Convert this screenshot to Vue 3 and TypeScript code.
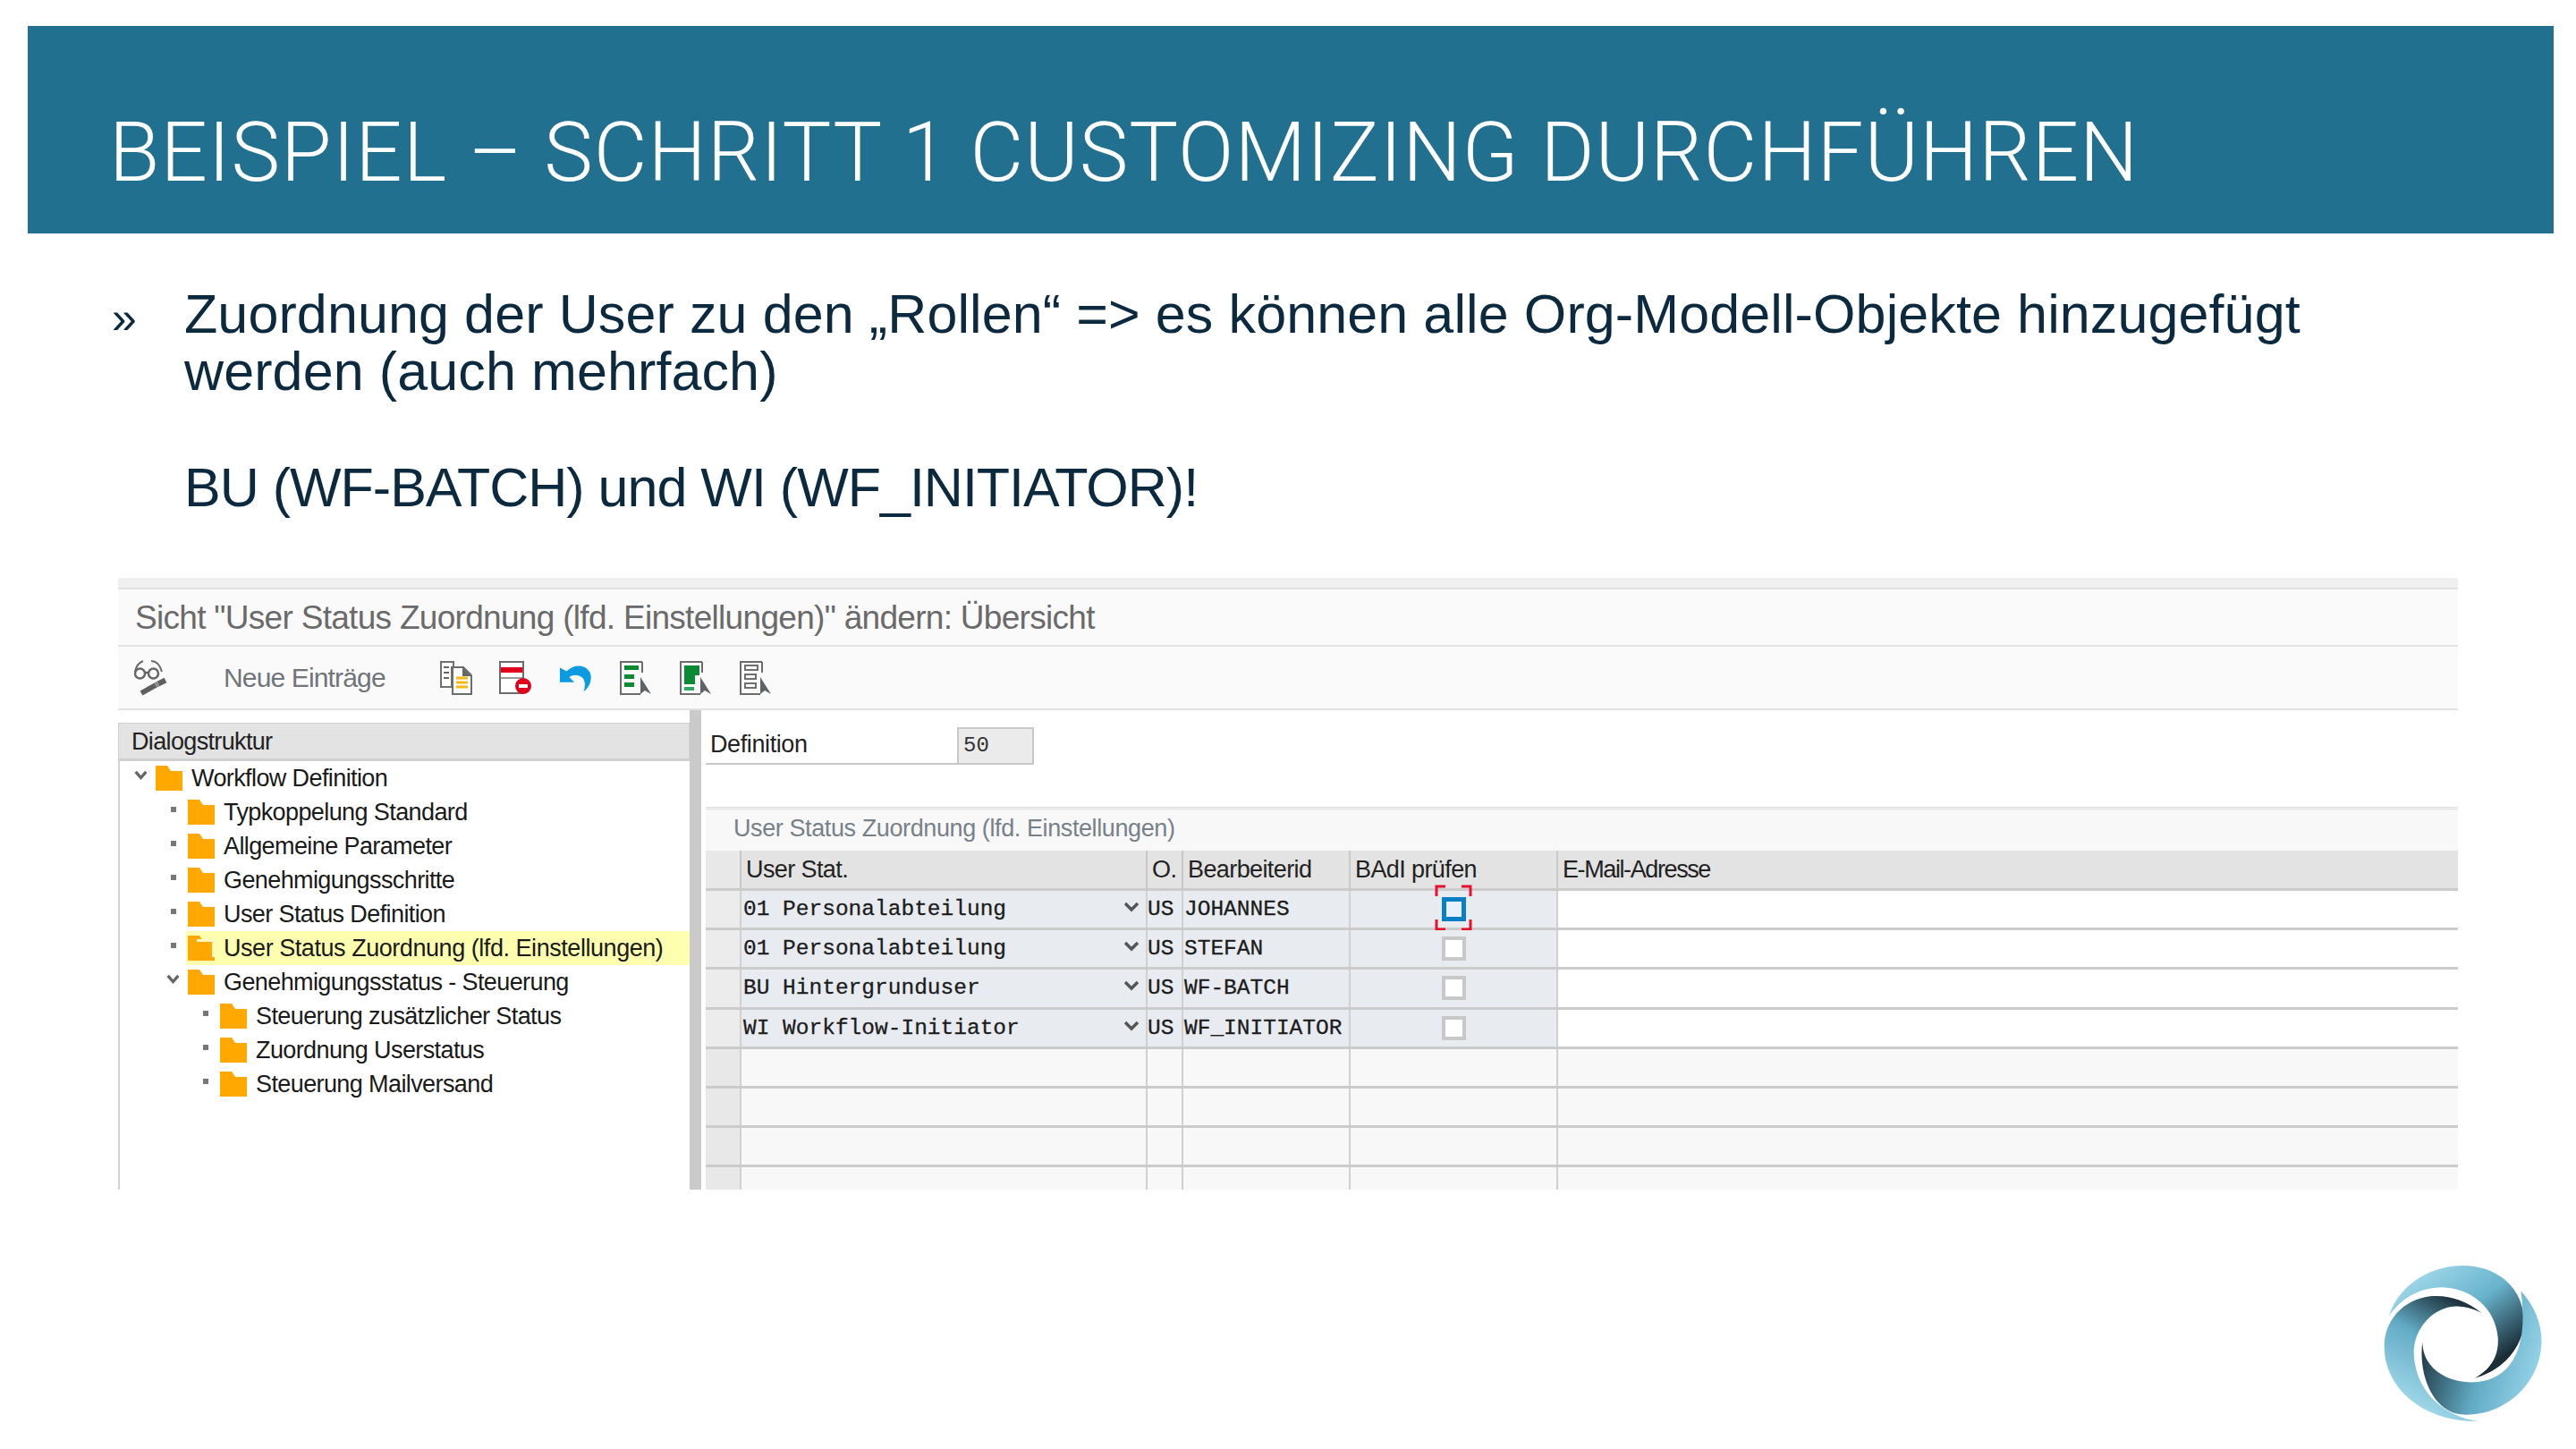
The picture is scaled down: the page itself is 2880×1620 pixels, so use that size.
<script setup lang="ts">
interface TreeNode {
  label: string;
  level: number;
  expanded?: boolean;
  selected?: boolean;
}

const treeNodes: TreeNode[] = [
  { label: 'Workflow Definition', level: 0, expanded: true },
  { label: 'Typkoppelung Standard', level: 1 },
  { label: 'Allgemeine Parameter', level: 1 },
  { label: 'Genehmigungsschritte', level: 1 },
  { label: 'User Status Definition', level: 1 },
  { label: 'User Status Zuordnung (lfd. Einstellungen)', level: 1, selected: true },
  { label: 'Genehmigungsstatus - Steuerung', level: 1, expanded: true },
  { label: 'Steuerung zusätzlicher Status', level: 2 },
  { label: 'Zuordnung Userstatus', level: 2 },
  { label: 'Steuerung Mailversand', level: 2 },
];

const rows = [
  { status: '01 Personalabteilung', obj: 'US', agent: 'JOHANNES', focus: true },
  { status: '01 Personalabteilung', obj: 'US', agent: 'STEFAN', focus: false },
  { status: 'BU Hintergrunduser', obj: 'US', agent: 'WF-BATCH', focus: false },
  { status: 'WI Workflow-Initiator', obj: 'US', agent: 'WF_INITIATOR', focus: false },
];
</script>

<template>
  <div class="slide">
    <header class="banner">
      <h1>BEISPIEL – SCHRITT 1 CUSTOMIZING DURCHFÜHREN</h1>
    </header>

    <section class="copy">
      <span class="mark">»</span>
      <div>
        <p class="wide">Zuordnung der User zu den „Rollen“ =&gt; es können alle Org-Modell-Objekte hinzugefügt<br />werden (auch mehrfach)</p>
        <p class="second">BU (WF-BATCH) und WI (WF_INITIATOR)!</p>
      </div>
    </section>

    <section class="sap">
      <div class="sap-strip"></div>
      <div class="sap-title">Sicht "User Status Zuordnung (lfd. Einstellungen)" ändern: Übersicht</div>
      <div class="sap-tools">
        <svg class="glasses" width="40" height="40" viewBox="0 0 40 40">
          <path d="M1 13C2 7 5 3 10 1M19 1c6 0 10 5 12 12" fill="none" stroke="#6a6a6a" stroke-width="2" />
          <circle cx="6.500" cy="15" r="5.500" fill="none" stroke="#666" stroke-width="2.500" />
          <circle cx="21.500" cy="15" r="5.500" fill="none" stroke="#666" stroke-width="2.500" />
          <path d="M12 14h4" stroke="#666" stroke-width="2.500" />
          <path d="M8 37l16-9M27 26.500l8-4" stroke="#5f5f5f" stroke-width="6" />
          <path d="M24 28l3-1.500" stroke="#8a8a8a" stroke-width="6" />
        </svg>
        <span class="new-entries">Neue Einträge</span>
        <div class="tool-icons">
          <svg width="38" height="40" viewBox="0 0 38 40">
            <path d="M2 2h14v6h-2v22H2z" fill="#fff" stroke="#707070" stroke-width="2" />
            <path d="M5 8h6M5 14h6M5 20h6" stroke="#666" stroke-width="2" />
            <path d="M15 8h12l9 9v21H15z" fill="#fff" stroke="#6c6c6c" stroke-width="2" />
            <path d="M26 8l10 10H26z" fill="#666" />
            <path d="M19 20h13M19 25h13M19 30h13" stroke="#fdb813" stroke-width="3" />
          </svg>
          <svg width="38" height="40" viewBox="0 0 38 40">
            <path d="M1 2h26v35H1z" fill="#fff" stroke="#6c6c6c" stroke-width="2" />
            <rect x="2" y="8" width="24" height="6" fill="#e1001b" />
            <path d="M2 20h24" stroke="#999" stroke-width="2" />
            <circle cx="27" cy="29" r="9" fill="#e1001b" />
            <rect x="22" y="27" width="10" height="4" fill="#fff" />
          </svg>
          <svg width="38" height="40" viewBox="0 0 40 40">
            <path d="M1 8v17h17l-6-6c5-4 12-3 16 1 3 4 3 10 1 16 7-5 11-15 7-23C31 4 18 3 9 12z" fill="#0a9be0" />
          </svg>
          <svg width="38" height="40" viewBox="0 0 38 40">
            <path d="M26 2H2v36h22" fill="none" stroke="#6c6c6c" stroke-width="2" />
            <path d="M26 2v12" stroke="#6c6c6c" stroke-width="2" />
            <rect x="6" y="6" width="16" height="5" fill="#0a8a32" />
            <rect x="6" y="16" width="11" height="5" fill="#0a8a32" />
            <rect x="6" y="25" width="11" height="5" fill="#0a8a32" />
            <path d="M24 19l12 19-7-4-5 4z" fill="#5e6368" />
          </svg>
          <svg width="38" height="40" viewBox="0 0 38 40">
            <path d="M26 2H2v36h22" fill="none" stroke="#6c6c6c" stroke-width="2" />
            <path d="M26 2v12" stroke="#6c6c6c" stroke-width="2" />
            <path d="M6 6h17v11h-5v10H6z" fill="#0a8a32" />
            <path d="M6 30h11v4H6z" fill="#2aa860" />
            <path d="M24 19l12 19-7-4-5 4z" fill="#5e6368" />
          </svg>
          <svg width="38" height="40" viewBox="0 0 38 40">
            <path d="M26 2H2v36h22" fill="none" stroke="#6c6c6c" stroke-width="2" />
            <path d="M26 2v12" stroke="#6c6c6c" stroke-width="2" />
            <rect x="7" y="6" width="14" height="5" fill="#fff" stroke="#707070" stroke-width="2" />
            <rect x="7" y="16" width="12" height="5" fill="#fff" stroke="#707070" stroke-width="2" />
            <rect x="7" y="26" width="12" height="5" fill="#fff" stroke="#707070" stroke-width="2" />
            <path d="M24 19l12 19-7-4-5 4z" fill="#5e6368" />
          </svg>
        </div>
      </div>

      <div class="sap-main">
        <aside class="tree">
          <div class="tree-head">Dialogstruktur</div>
          <ul class="tree-list">
            <li
              v-for="node in treeNodes"
              :key="node.label"
              class="tree-row"
              :class="['lvl-' + node.level, { selected: node.selected }]"
            >
              <span class="marker">
                <svg v-if="node.expanded" width="18" height="14" viewBox="0 0 18 14">
                  <path d="M2 2l7 8 7-8" fill="none" stroke="#666" stroke-width="4" />
                </svg>
                <span v-else class="dot"></span>
              </span>
              <svg class="folder" width="30" height="28" viewBox="0 0 30 28">
                <path d="M0 0h13l4 6h13v22H0z" fill="#ffa800" />
                <path v-if="node.selected" d="M10 4h20v20h-3V7H10z" fill="#fff6c0" />
              </svg>
              <span class="tree-label">{{ node.label }}</span>
            </li>
          </ul>
        </aside>
        <div class="splitter"></div>
        <div class="content">
          <div class="def-row">
            <span class="def-label">Definition</span>
            <span class="def-value">50</span>
          </div>

          <div class="table-panel">
            <div class="table-title">User Status Zuordnung (lfd. Einstellungen)</div>
            <div class="grid head">
              <div class="cell sel"></div>
              <div class="cell">User Stat.</div>
              <div class="cell">O.</div>
              <div class="cell">Bearbeiterid</div>
              <div class="cell">BAdI prüfen</div>
              <div class="cell tight">E-Mail-Adresse</div>
            </div>
            <div v-for="(row, i) in rows" :key="i" class="grid data">
              <div class="cell sel"></div>
              <div class="cell mono status">
                {{ row.status }}
                <svg class="drop" width="16" height="12" viewBox="0 0 16 12">
                  <path d="M1 2l7 7 7-7" fill="none" stroke="#555" stroke-width="3.500" />
                </svg>
              </div>
              <div class="cell mono obj">{{ row.obj }}</div>
              <div class="cell mono agent">{{ row.agent }}</div>
              <div class="cell check">
                <span class="box" :class="{ active: row.focus }"></span>
                <svg v-if="row.focus" class="focus" width="42" height="52" viewBox="0 0 42 52">
                  <path d="M12 2H2v11M30 2h10v11M2 39v11h10M40 39v11H30" fill="none" stroke="#e8102a" stroke-width="3" />
                </svg>
              </div>
              <div class="cell mail"></div>
            </div>
            <div v-for="n in 4" :key="n" class="grid empty">
              <div class="cell sel"></div>
              <div class="cell"></div>
              <div class="cell"></div>
              <div class="cell"></div>
              <div class="cell"></div>
              <div class="cell"></div>
            </div>
          </div>
        </div>
      </div>
    </section>

    <svg class="logo" width="240" height="230" viewBox="0 0 720 690">
      <defs>
        <linearGradient id="swirlA" x1="0.15" y1="0.1" x2="0.8" y2="0.85">
          <stop offset="0" stop-color="#a0d8ea" />
          <stop offset="0.5" stop-color="#68b3cd" />
          <stop offset="1" stop-color="#1b2e38" />
        </linearGradient>
        <linearGradient id="swirlB" x1="0.85" y1="0.1" x2="0.45" y2="1">
          <stop offset="0" stop-color="#1f3540" />
          <stop offset="0.4" stop-color="#62abc5" />
          <stop offset="1" stop-color="#a5dcec" />
        </linearGradient>
        <linearGradient id="swirlC" x1="0" y1="0.3" x2="1" y2="0.6">
          <stop offset="0" stop-color="#1b2e38" />
          <stop offset="0.55" stop-color="#62abc5" />
          <stop offset="1" stop-color="#96d4e8" />
        </linearGradient>
      </defs>
      <path d="M92 245C130 130 240 75 340 75C470 75 548 165 545 265C543 350 470 430 380 452C440 420 462 370 458 315C450 220 370 150 270 148C190 148 130 190 92 245Z" fill="url(#swirlA)" />
      <path d="M405 235C350 190 290 172 230 178C135 190 75 265 77 350C80 490 210 600 392 597C270 580 180 490 176 370C175 280 250 205 330 212C355 214 385 222 405 235Z" fill="url(#swirlB)" />
      <path d="M205 330C205 420 290 470 380 466C490 460 565 370 535 160C590 220 612 290 602 360C585 480 480 575 350 575C240 575 190 440 205 330Z" fill="url(#swirlC)" />
    </svg>
  </div>
</template>

<style scoped>
.slide {
  position: relative;
  width: 2880px;
  height: 1620px;
  overflow: hidden;
  background: #fff;
  font-family: "Liberation Sans", Arial, sans-serif;
}
.banner {
  margin: 29px 25px 0 31px;
  height: 232px;
  box-sizing: border-box;
  padding: 89px 0 0 91px;
  background: #22708f;
}
.banner h1 {
  margin: 0;
  font-family: Roboto, "Liberation Sans", sans-serif;
  font-weight: 300;
  font-size: 92px;
  line-height: 106px;
  letter-spacing: 1.050px;
  color: #fff;
  white-space: nowrap;
}
.copy {
  display: flex;
  margin: 58px 0 0 125px;
  color: #0b2a40;
  font-size: 61px;
  line-height: 64px;
}
.mark {
  width: 81px;
  flex: none;
  font-size: 50px;
  padding-top: 4px;
}
.copy p {
  margin: 0;
  white-space: nowrap;
  letter-spacing: -1px;
}
.copy .wide {
  letter-spacing: 0.110px;
}
.copy .second {
  margin-top: 66px;
}
.sap {
  position: absolute;
  left: 132px;
  top: 646px;
  width: 2616px;
  height: 684px;
  overflow: hidden;
  display: flex;
  flex-direction: column;
  background: #fff;
}
.sap-strip {
  height: 11px;
  flex: none;
  background: #f0f0f0;
  border-bottom: 2px solid #e2e2e2;
}
.sap-title {
  height: 64px;
  flex: none;
  display: flex;
  align-items: center;
  box-sizing: border-box;
  padding: 2px 0 0 19px;
  background: #fafafa;
  color: #6a6a6a;
  font-size: 37px;
  letter-spacing: -0.7px;
  border-bottom: 2px solid #e2e2e2;
}
.sap-tools {
  height: 69px;
  flex: none;
  display: flex;
  align-items: center;
  padding-left: 18px;
  background: #fafafa;
  border-bottom: 2px solid #e2e2e2;
}
.new-entries {
  margin-left: 60px;
  color: #70757a;
  font-size: 30px;
  letter-spacing: -0.85px;
}
.tool-icons {
  display: flex;
  gap: 29px;
  margin-left: 60px;
}
.sap-main {
  flex: 1;
  min-height: 0;
  display: flex;
}
.tree {
  width: 639px;
  flex: none;
  padding-top: 14px;
  box-sizing: border-box;
}
.tree-head {
  height: 39px;
  line-height: 40px;
  padding-left: 14px;
  background: #e3e3e3;
  border: 1px solid #d0d0d0;
  border-bottom-width: 3px;
  color: #222;
  font-size: 27px;
  letter-spacing: -0.65px;
}
.tree-list {
  list-style: none;
  margin: 0;
  padding: 0;
  height: 500px;
  box-sizing: border-box;
  border-left: 2px solid #d4d4d4;
}
.tree-row {
  height: 38px;
  display: flex;
  align-items: center;
  color: #1a1a1a;
  font-size: 27px;
  white-space: nowrap;
}
.tree-row.lvl-0 { padding-left: 16px; }
.tree-row.lvl-1 { padding-left: 52px; }
.tree-row.lvl-2 { padding-left: 88px; }
.marker {
  width: 24px;
  height: 28px;
  flex: none;
  display: flex;
  justify-content: center;
  align-items: flex-start;
  padding: 4px 9px 0 0;
  box-sizing: border-box;
}
.dot {
  width: 6px;
  height: 6px;
  margin-top: 4px;
  background: #777;
}
.folder {
  flex: none;
}
.tree-label {
  margin-left: 10px;
  letter-spacing: -0.6px;
}
.tree-row.selected .tree-label {
  letter-spacing: -0.45px;
}
.tree-row.selected {
  background: linear-gradient(to right, transparent 74px, #ffffb0 74px);
}
.splitter {
  width: 13px;
  flex: none;
  background: #cacaca;
}
.content {
  flex: 1;
  min-width: 0;
  padding: 19px 0 0 5px;
  box-sizing: border-box;
}
.def-row {
  display: flex;
  height: 42px;
}
.def-label {
  width: 281px;
  box-sizing: border-box;
  padding: 4px 0 0 5px;
  color: #222;
  font-size: 27px;
  letter-spacing: -0.4px;
  border-bottom: 2px solid #c8c8c8;
}
.def-value {
  width: 86px;
  box-sizing: border-box;
  padding: 1px 0 0 5px;
  background: #ebebeb;
  border: 2px solid #c8c8c8;
  color: #333;
  font-family: "Liberation Mono", monospace;
  font-size: 24px;
  line-height: 36px;
}
.table-panel {
  margin-top: 47px;
  border-top: 3px double #dcdcdc;
  background: #f8f8f8;
}
.table-title {
  height: 46px;
  padding-left: 31px;
  line-height: 42px;
  color: #77818a;
  font-size: 27px;
  letter-spacing: -0.4px;
}
.grid {
  display: grid;
  grid-template-columns: 38px 454px 40px 187px 232px 1fr;
  height: 44.200px;
  box-sizing: border-box;
  border-bottom: 3px solid #cbcbcb;
}
.cell {
  position: relative;
  display: flex;
  align-items: center;
  padding-left: 5px;
  border-left: 2px solid #d0d0d0;
  white-space: nowrap;
  overflow: visible;
}
.cell.sel {
  border-left: 0;
  background: #e8e8e8;
}
.grid.head {
  height: 45px;
  background: #e3e3e3;
  color: #222;
  font-size: 27px;
  letter-spacing: -0.6px;
}
.head .cell {
  border-left-color: #c8c8c8;
}
.head .tight {
  letter-spacing: -1.400px;
}
.data .cell {
  background: #e8ecf0;
}
.data .cell.sel {
  background: #ececec;
}
.data .cell.mail {
  background: #fff;
  padding-left: 0;
}
.mono {
  font-family: "Liberation Mono", monospace;
  font-size: 24.500px;
  color: #1c1c1c;
  -webkit-text-stroke: 0.3px #1c1c1c;
}
.status {
  padding-left: 2px;
}
.obj {
  padding-left: 0;
}
.agent {
  padding-left: 1px;
}
.drop {
  position: absolute;
  right: 8px;
  top: 12px;
}
.check {
  justify-content: center;
  padding-left: 0;
}
.box {
  width: 27px;
  height: 27px;
  box-sizing: border-box;
  background: #fff;
  border: 4px solid #c8c8c8;
}
.box.active {
  background: #e8f1f7;
  border: 5px solid #0a7fc4;
}
.focus {
  position: absolute;
  left: 94px;
  top: -7px;
}
.logo {
  position: absolute;
  right: 0;
  bottom: 0;
}
</style>

<style>
html,
body {
  margin: 0;
  background: #fff;
}
</style>
